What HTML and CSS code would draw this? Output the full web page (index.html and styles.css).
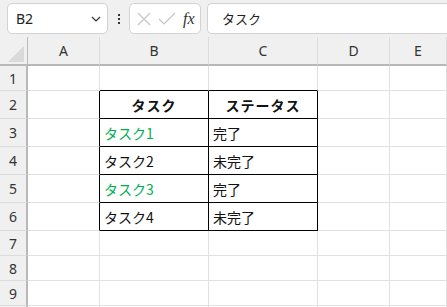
FILE: index.html
```html
<!DOCTYPE html>
<html lang="ja">
<head>
<meta charset="utf-8">
<link rel="stylesheet" href="styles.css">
</head>
<body>
<div class="app">
  <div class="toolbar">
    <div class="namebox">
      <span class="name">B2</span>
      <svg class="chev" width="10" height="6" viewBox="0 0 10 6"><path d="M1 1 L5 5 L9 1" fill="none" stroke="#333" stroke-width="1.2"/></svg>
    </div>
    <div class="dots"><span></span><span></span><span></span></div>
    <div class="fxbox">
      <svg width="16" height="16" viewBox="0 0 16 16"><path d="M2 2 L14 14 M14 2 L2 14" stroke="#c6c6c6" stroke-width="1.2" fill="none"/></svg>
      <svg width="18" height="14" viewBox="0 0 18 14"><path d="M1 7 L6 12 L17 1" stroke="#c6c6c6" stroke-width="1.2" fill="none"/></svg>
      <span class="fx">fx</span>
    </div>
    <div class="formula">タスク</div>
  </div>
  <div class="sheet">
    <div class="corner"><span class="tri"></span></div>
    <div class="ch">A</div><div class="ch">B</div><div class="ch">C</div><div class="ch">D</div><div class="ch">E</div>

    <div class="rh">1</div><div class="c"></div><div class="c bb"></div><div class="c bb"></div><div class="c"></div><div class="c"></div>
    <div class="rh tall">2</div><div class="c br"></div><div class="c t hd">タスク</div><div class="c t hd">ステータス</div><div class="c"></div><div class="c"></div>
    <div class="rh tall">3</div><div class="c br"></div><div class="c t green">タスク1</div><div class="c t">完了</div><div class="c"></div><div class="c"></div>
    <div class="rh tall">4</div><div class="c br"></div><div class="c t">タスク2</div><div class="c t">未完了</div><div class="c"></div><div class="c"></div>
    <div class="rh tall">5</div><div class="c br"></div><div class="c t green">タスク3</div><div class="c t">完了</div><div class="c"></div><div class="c"></div>
    <div class="rh tall">6</div><div class="c br"></div><div class="c t">タスク4</div><div class="c t">未完了</div><div class="c"></div><div class="c"></div>
    <div class="rh">7</div><div class="c"></div><div class="c"></div><div class="c"></div><div class="c"></div><div class="c"></div>
    <div class="rh">8</div><div class="c"></div><div class="c"></div><div class="c"></div><div class="c"></div><div class="c"></div>
    <div class="rh">9</div><div class="c"></div><div class="c"></div><div class="c"></div><div class="c"></div><div class="c"></div>
    <div class="rh"></div><div class="c"></div><div class="c"></div><div class="c"></div><div class="c"></div><div class="c"></div>
  </div>
</div>
</body>
</html>
```
FILE: styles.css
```css
* { box-sizing: border-box; }
html, body { margin: 0; padding: 0; }
body {
  width: 447px;
  height: 307px;
  overflow: hidden;
  background: #ffffff;
  font-family: "Noto Sans CJK JP", "Noto Sans", sans-serif;
}
.app { width: 447px; height: 307px; overflow: hidden; }
.toolbar {
  height: 37px;
  background: #f0f0f0;
  display: flex;
  align-items: flex-start;
  padding: 3px 0 0 7px;
}
.namebox {
  width: 101px;
  height: 31px;
  background: #fff;
  border: 1px solid #d2d2d2;
  border-radius: 5px;
  display: flex;
  align-items: center;
  justify-content: space-between;
  padding: 0 6px 0 8px;
}
.name {
  font-family: "Noto Sans", sans-serif;
  font-size: 14px;
  color: #222;
}
.dots {
  width: 21px;
  height: 31px;
  display: flex;
  flex-direction: column;
  align-items: center;
  justify-content: center;
  gap: 2px;
}
.dots span {
  width: 2px;
  height: 2px;
  background: #333;
}
.fxbox {
  width: 72px;
  height: 31px;
  background: #fff;
  border: 1px solid #d2d2d2;
  border-radius: 5px;
  display: flex;
  align-items: center;
  gap: 6px;
  padding: 0 0 0 6px;
}
.fx {
  font-family: "Liberation Serif", serif;
  font-style: italic;
  font-size: 16px;
  color: #333;
  margin-left: 1px;
}
.formula {
  margin-left: 6px;
  flex: 1;
  height: 31px;
  background: #fff;
  border: 1px solid #d2d2d2;
  border-right: none;
  border-radius: 5px 0 0 5px;
  display: flex;
  align-items: center;
  padding-left: 14px;
  font-size: 13px;
  color: #222;
}
.sheet {
  display: grid;
  grid-template-columns: 28px 72px 109px 109px 72px 57px;
  grid-template-rows: 29px 25px 28px 28px 28px 28px 28px 25px 25px 25px 25px;
}
.corner {
  background: #f0f0f0;
  border-right: 1px solid #b8b8b8;
  border-bottom: 2px solid #b8b8b8;
  position: relative;
}
.tri {
  position: absolute;
  right: 3px;
  bottom: 2px;
  width: 0;
  height: 0;
  border-left: 16px solid transparent;
  border-bottom: 16px solid #d9d9d9;
}
.ch {
  background: #f0f0f0;
  border-right: 1px solid #dcdcdc;
  border-bottom: 2px solid #b8b8b8;
  display: flex;
  align-items: center;
  justify-content: center;
  font-family: "Noto Sans", sans-serif;
  font-size: 14px;
  color: #333;
}
.rh {
  background: #f0f0f0;
  border-right: 2px solid #b8b8b8;
  border-bottom: 1px solid #dcdcdc;
  display: flex;
  align-items: center;
  justify-content: center;
  font-family: "Noto Sans", sans-serif;
  font-size: 14px;
  color: #333;
}
.c {
  border-right: 1px solid #e1e1e1;
  border-bottom: 1px solid #e1e1e1;
  display: flex;
  align-items: center;
  padding-left: 4px;
  font-size: 14px;
  color: #111;
  white-space: nowrap;
}
.c.bb { border-bottom-color: #000; }
.c.br { border-right-color: #000; }
.c.t { border-right-color: #000; border-bottom-color: #000; }
.c.hd {
  justify-content: center;
  padding-left: 0;
  font-weight: 700;
  letter-spacing: 1px;
}
.c.green { color: #00b050; }
```
